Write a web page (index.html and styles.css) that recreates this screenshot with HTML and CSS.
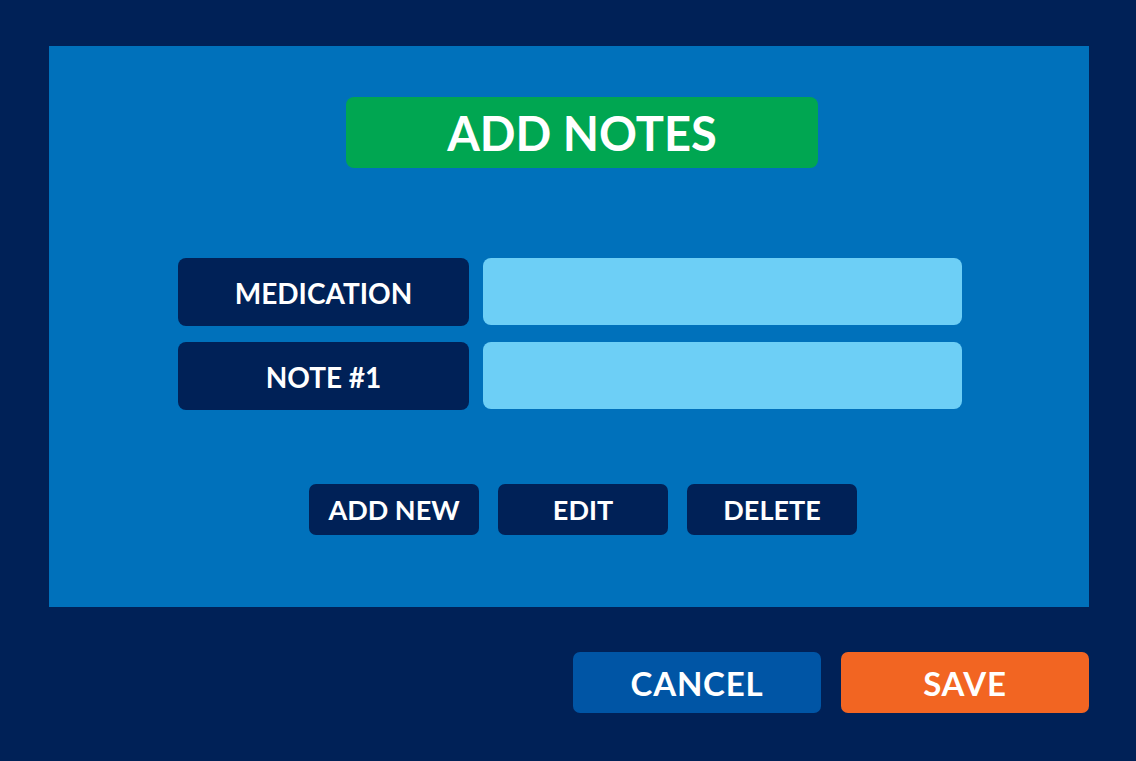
FILE: index.html
```html
<!DOCTYPE html>
<html lang="en">
<head>
<meta charset="utf-8">
<title>Add Notes</title>
<link rel="stylesheet" href="styles.css">
</head>
<body>
<div class="screen">
  <section class="panel">
    <h1 class="title">ADD NOTES</h1>
    <div class="form">
      <div class="row">
        <div class="label">MEDICATION</div>
        <div class="field"></div>
      </div>
      <div class="row">
        <div class="label">NOTE #1</div>
        <div class="field"></div>
      </div>
    </div>
    <div class="actions">
      <button class="btn">ADD NEW</button>
      <button class="btn">EDIT</button>
      <button class="btn">DELETE</button>
    </div>
  </section>
  <div class="footer">
    <button class="big cancel">CANCEL</button>
    <button class="big save">SAVE</button>
  </div>
</div>
</body>
</html>
```

FILE: styles.css
```css
html, body {
  margin: 0;
  padding: 0;
  background: #002157;
  font-family: "Lato", "DejaVu Sans", sans-serif;
  font-weight: 700;
  color: #ffffff;
}
.screen {
  width: 1136px;
  height: 761px;
  padding: 46px 47px 0 49px;
  box-sizing: border-box;
  display: flex;
  flex-direction: column;
}
.panel {
  height: 561px;
  background: #0071bb;
  display: flex;
  flex-direction: column;
  align-items: flex-start;
}
.title {
  margin: 51px 0 0 297px;
  width: 472px;
  height: 71px;
  background: #00a651;
  border-radius: 8px;
  display: flex;
  align-items: center;
  justify-content: center;
  font-size: 47px;
  font-weight: 700;
  line-height: 1;
  padding-top: 2px;
  box-sizing: border-box;
}
.form {
  margin: 90px 0 0 129px;
  display: flex;
  flex-direction: column;
  gap: 16px;
}
.row {
  display: flex;
  gap: 14px;
  align-items: flex-start;
}
.label {
  width: 291px;
  height: 68px;
  background: #002157;
  border-radius: 8px;
  display: flex;
  align-items: center;
  justify-content: center;
  font-size: 28px;
  padding-top: 1px;
  box-sizing: border-box;
}
.field {
  width: 479px;
  height: 67px;
  background: #6dcff6;
  border-radius: 8px;
}
.actions {
  margin: 74px 0 0 260px;
  display: flex;
  gap: 19px;
}
.btn {
  width: 170px;
  height: 51px;
  background: #002157;
  border: none;
  border-radius: 7px;
  color: #ffffff;
  font-family: inherit;
  font-weight: 700;
  font-size: 27px;
  padding: 0;
  display: flex;
  align-items: center;
  justify-content: center;
}
.footer {
  margin: 45px 0 0 524px;
  display: flex;
  gap: 20px;
}
.big {
  width: 249px;
  height: 61px;
  border: none;
  border-radius: 7px;
  color: #ffffff;
  font-family: inherit;
  font-weight: 700;
  font-size: 33px;
  letter-spacing: 0.8px;
  padding: 0;
  display: flex;
  align-items: center;
  justify-content: center;
}
.cancel { background: #0055a5; }
.save { background: #f26522; }
```
